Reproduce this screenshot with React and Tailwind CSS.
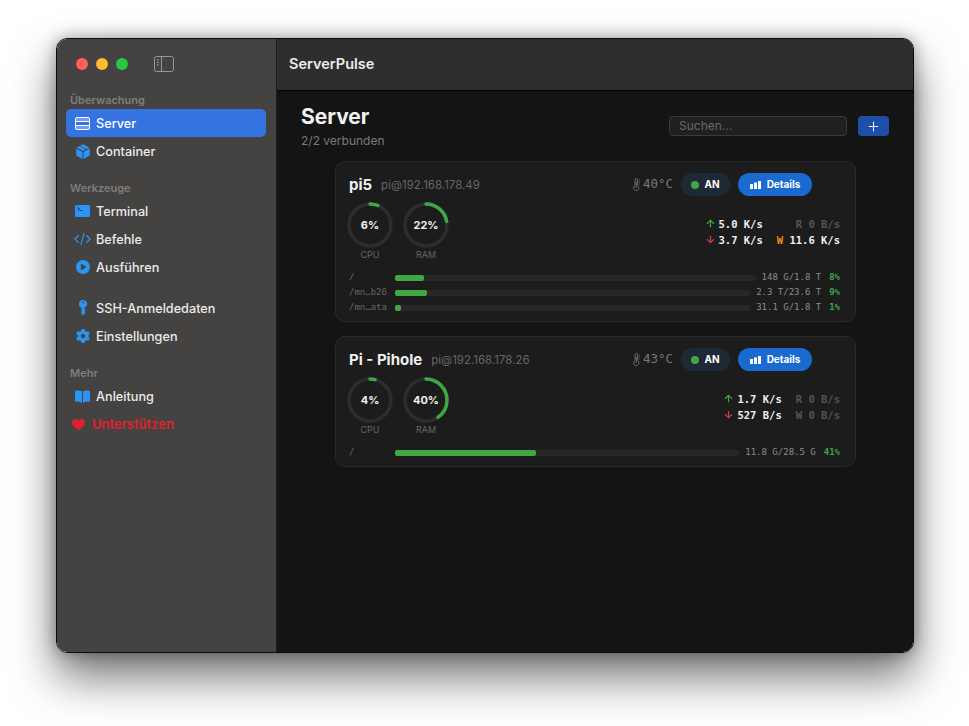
import { ArrowUp, ArrowDown, Plus } from 'lucide-react'
import { FaGear, FaHeart, FaCirclePlay } from 'react-icons/fa6'

const mono = "font-['DejaVu_Sans_Mono','Liberation_Mono',monospace]"

// sidebar icons, all sit in a 17px wide slot
function ServerIcon() {
  return (
    <svg width="15" height="13" viewBox="0 0 15 13" fill="none" stroke="white" strokeWidth="1">
      <rect x="0.5" y="0.5" width="14" height="12" rx="1.5" />
      <path d="M1 4.500h13M1 8.500h13" />
      <path d="M1 1h13v3.500H1z" fill="white" fillOpacity="0.3" stroke="none" />
      <path d="M1 8.500h13V12H1z" fill="white" fillOpacity="0.3" stroke="none" />
    </svg>
  )
}

function BoxIcon() {
  return (
    <svg width="14" height="15" viewBox="0 0 14 15" fill="#2b95f6">
      <path d="M7 0.2 13.4 3.600 7 7 .6 3.600Z" />
      <path d="M.2 4.500 6.500 7.900V15L1 12.100Q.2 11.700.2 10.800Z" />
      <path d="M13.800 4.500 7.500 7.900V15L13 12.100Q13.800 11.700 13.800 10.800Z" />
      <path d="M3.600 1.800 10 5.300" stroke="#454341" strokeWidth="0.7" />
    </svg>
  )
}

function TerminalIcon() {
  return (
    <svg width="15" height="12" viewBox="0 0 15 12">
      <rect width="15" height="12" rx="1.500" fill="#2b95f6" />
      <path d="M2.500 2.500 4.500 4 2.500 5.500" fill="none" stroke="#123" strokeWidth="0.8" />
      <path d="M5.200 5.500h2.300" stroke="#123" strokeWidth="0.8" />
    </svg>
  )
}

function CodeIcon() {
  return (
    <svg width="18" height="14" viewBox="0 0 18 14" fill="none" stroke="#2b95f6" strokeWidth="1.2">
      <path d="M5 3 .9 7 5 11M13 3l4.100 4L13 11M10.700 .8 7.300 13.200" />
    </svg>
  )
}

function KeyIcon() {
  return (
    <svg width="8" height="16" viewBox="0 0 8 16" fill="#2b95f6">
      <path d="M4 0a4 4 0 0 1 1.500 7.700V9l1 1-1 1 1 1.200L4 15.500 2.500 14V7.700A4 4 0 0 1 4 0Z" />
      <circle cx="4" cy="2.400" r="0.9" fill="#454341" />
    </svg>
  )
}

function BookIcon() {
  return (
    <svg width="15" height="13" viewBox="0 0 15 13" fill="#2b95f6">
      <path d="M7 1.500V13Q4.500 11.300.4 11.600q-.4 0-.4-.5V1.300Q0 .8.6.7 4.500 .1 7 1.500Z" />
      <path d="M8 1.500V13q2.500-1.700 6.600-1.400.4 0 .4-.5V1.300q0-.5-.6-.6Q10.500 .1 8 1.500Z" />
    </svg>
  )
}

function NavItem({ icon, label, active }) {
  return (
    <div className={`flex h-7 items-center rounded-[5px] pl-[8px] text-[12.700px] font-medium ${active ? 'bg-[#3573e3] text-white' : 'text-[#ebebeb]'}`}>
      <span className="flex w-[17px] shrink-0 items-center justify-center">{icon}</span>
      <span className="ml-[5px] pt-[2px]">{label}</span>
    </div>
  )
}

function SectionLabel({ children, className = '' }) {
  return <div className={`mb-px flex h-4 items-center pl-[4px] text-[11px] font-semibold text-[#7f7d7b] ${className}`}>{children}</div>
}

function Sidebar() {
  return (
    <aside className="flex w-[220px] shrink-0 flex-col border-r border-[#1c1c1c] bg-[#454341] pr-[10px] pl-[9px]">
      <div className="mb-[4px] flex h-[49px] shrink-0 items-center pl-[10px]">
        <span className="h-3 w-3 rounded-full bg-[#ff5f57]" />
        <span className="ml-2 h-3 w-3 rounded-full bg-[#febc2e]" />
        <span className="ml-2 h-3 w-3 rounded-full bg-[#28c840]" />
        <svg className="ml-[26px]" width="20" height="16" viewBox="0 0 20 16" fill="none" stroke="#9a9896" strokeWidth="1">
          <rect x="0.5" y="0.500" width="19" height="15" rx="2" />
          <path d="M7.500 1v14" />
          <path d="M3 4h2M3 6.500h2M3 9h2" strokeWidth="1.200" />
        </svg>
      </div>

      <SectionLabel>Überwachung</SectionLabel>
      <NavItem active icon={<ServerIcon />} label="Server" />
      <NavItem icon={<BoxIcon />} label="Container" />

      <SectionLabel className="mt-[15px]">Werkzeuge</SectionLabel>
      <NavItem icon={<TerminalIcon />} label="Terminal" />
      <NavItem icon={<CodeIcon />} label="Befehle" />
      <NavItem icon={<FaCirclePlay size={14} color="#2b95f6" />} label="Ausführen" />

      <div className="mt-[13px]">
        <NavItem icon={<KeyIcon />} label="SSH-Anmeldedaten" />
        <NavItem icon={<FaGear size={14} color="#2b95f6" />} label="Einstellungen" />
      </div>

      <SectionLabel className="mt-[15px]">Mehr</SectionLabel>
      <NavItem icon={<BookIcon />} label="Anleitung" />
      <div className="flex h-7 items-center pl-[6px] text-[13px] font-semibold text-[#e0202e]">
        <FaHeart size={13} />
        <span className="ml-[7px] pt-[2px]">Unterstützen</span>
      </div>
    </aside>
  )
}

function Ring({ value, label }) {
  const r = 21
  const c = 2 * Math.PI * r
  return (
    <div className="flex w-[46px] flex-col items-center">
      <div className="relative h-[46px] w-[46px]">
        <svg width="46" height="46" viewBox="0 0 46 46" className="-rotate-90">
          <circle cx="23" cy="23" r={r} fill="none" stroke="#2d2d2d" strokeWidth="3.5" />
          <circle cx="23" cy="23" r={r} fill="none" stroke="#3fa845" strokeWidth="3.5" strokeLinecap="round" strokeDasharray={`${(c * value) / 100} ${c}`} />
        </svg>
        <span className="absolute inset-0 flex items-center justify-center text-[11px] font-bold text-[#f2f2f2]">{value}%</span>
      </div>
      <span className="mt-px text-[9px] leading-[11px] text-[#666]">{label}</span>
    </div>
  )
}

function Thermometer() {
  return (
    <svg width="7" height="13" viewBox="0 0 7 13" fill="none" stroke="#6e6e6e" strokeWidth="1">
      <path d="M2 7.500V1.800a1.300 1.300 0 0 1 2.600 0V7.500a2.700 2.700 0 1 1-2.600 0Z" />
      <path d="M3.300 4v6" />
      <path d="M5.500 2h1.500M5.500 4h1.500M5.500 6h1.500" strokeWidth="0.700" />
    </svg>
  )
}

function DiskRow({ path, used, pct }) {
  return (
    <div className={`flex h-[15px] items-center text-[9px] ${mono}`}>
      <span className="w-[46px] shrink-0 text-[#666]">{path}</span>
      <div className="h-1.5 flex-1 rounded-[2px] bg-[#272727]">
        <div className="h-full min-w-[6px] rounded-[2px] bg-[#3fa845]" style={{ width: `${pct}%` }} />
      </div>
      <span className="ml-[6px] text-[#8c8c8c]">{used}</span>
      <span className="ml-[8px] font-bold text-[#3fa845]">{pct}%</span>
    </div>
  )
}

function ServerCard({ name, host, temp, cpu, ram, up, down, read, write, writeActive, disks }) {
  return (
    <div className="rounded-[10px] border border-[#2a2a2a] bg-[#1c1c1c] pt-[11px] pr-[15px] pb-[6px] pl-[11px]">
      <div className="flex h-[23px] items-center pl-[2px]">
        <span className="pt-[2px] text-[15px] font-bold text-[#f0f0f0]">{name}</span>
        <span className="ml-[9px] pt-[3px] text-[11.500px] text-[#666]">{host}</span>
        <div className="ml-auto flex items-center">
          <Thermometer />
          <span className={`ml-[3px] text-[12.500px] text-[#777] ${mono}`}>{temp}</span>
          <span className="ml-2 flex h-[23px] w-[49px] items-center justify-center gap-[5px] rounded-full bg-[#1d2a36] text-[10px] font-bold text-white">
            <span className="h-2 w-2 rounded-full bg-[#3fa845]" />
            AN
          </span>
          <span className="mr-[28px] ml-2 flex h-[23px] w-[74px] items-center justify-center gap-[6px] rounded-full bg-[#1a6ad0] text-[10px] font-bold text-white">
            <svg width="11" height="8" viewBox="0 0 11 8" fill="white">
              <rect y="3" width="3" height="5" />
              <rect x="4" y="1.500" width="3" height="6.500" />
              <rect x="8" width="3" height="8" />
            </svg>
            Details
          </span>
        </div>
      </div>

      <div className="mt-[6px] flex items-center gap-[10px] pb-[10px]">
        <Ring value={cpu} label="CPU" />
        <Ring value={ram} label="RAM" />
        <div className={`mt-[1px] ml-auto grid grid-cols-[auto_auto] justify-end gap-x-[14px] text-[10.500px] leading-4 font-bold ${mono}`}>
          <span className="flex items-center justify-end text-[#f0f0f0]">
            <ArrowUp size={11} strokeWidth={2.500} className="mr-[3px] text-[#3fa845]" />
            {up}
          </span>
          <span className="text-right text-[#555]">{read}</span>
          <span className="flex items-center justify-end text-[#f0f0f0]">
            <ArrowDown size={11} strokeWidth={2.500} className="mr-[3px] text-[#d43f3f]" />
            {down}
          </span>
          {writeActive ? (
            <span className="text-right text-[#f0f0f0]">
              <span className="text-[#f0920e]">W</span> {write}
            </span>
          ) : (
            <span className="text-right text-[#555]">W {write}</span>
          )}
        </div>
      </div>

      <div className="pl-[2px]">
        {disks.map((d) => (
          <DiskRow key={d.path} {...d} />
        ))}
      </div>
    </div>
  )
}

export default function App() {
  return (
    <div className="h-[726px] w-[969px] overflow-hidden bg-white pt-[38px] pl-[56px] font-['Inter',sans-serif]">
      <div className="flex h-[615px] w-[858px] overflow-hidden rounded-[11px] border border-[#0c0c0c] shadow-[0_24px_46px_rgba(0,0,0,0.55),0_0_16px_rgba(0,0,0,0.35)]">
        <Sidebar />
        <main className="flex min-w-0 flex-1 flex-col bg-[#141414]">
          <header className="flex h-[52px] shrink-0 items-center border-b border-black bg-[#2e2e2e] pb-[2px] pl-[12px] text-[14.500px] font-semibold text-[#ececec]">
            ServerPulse
          </header>

          <div className="flex items-start justify-between pt-[12px] pr-[24px] pl-[24px]">
            <div>
              <h1 className="text-[21px] leading-[27px] font-bold text-[#f2f2f2]">Server</h1>
              <p className="mt-[3px] text-[12px] leading-[16px] text-[#7a7a7a]">2/2 verbunden</p>
            </div>
            <div className="mt-[13px] flex items-center gap-[11px]">
              <div className="flex h-5 w-[178px] items-center rounded-[4px] border border-[#3a3a3a] bg-[#202020] pl-[9px] text-[12px] text-[#6a6a6a]">
                Suchen...
              </div>
              <button className="flex h-5 w-[31px] items-center justify-center rounded-[4px] bg-[#1e4fa8] text-[#e8eefa]">
                <Plus size={15} strokeWidth={1.700} />
              </button>
            </div>
          </div>

          <div className="mt-[12px] ml-[58px] flex w-[521px] flex-col gap-[14px]">
            <ServerCard
              name="pi5"
              host="pi@192.168.178.49"
              temp="40°C"
              cpu={6}
              ram={22}
              up="5.0 K/s"
              down="3.7 K/s"
              read="R 0 B/s"
              write="11.6 K/s"
              writeActive
              disks={[
                { path: '/', used: '148 G/1.8 T', pct: 8 },
                { path: '/mn…b26', used: '2.3 T/23.6 T', pct: 9 },
                { path: '/mn…ata', used: '31.1 G/1.8 T', pct: 1 },
              ]}
            />
            <ServerCard
              name="Pi - Pihole"
              host="pi@192.168.178.26"
              temp="43°C"
              cpu={4}
              ram={40}
              up="1.7 K/s"
              down="527 B/s"
              read="R 0 B/s"
              write="0 B/s"
              disks={[{ path: '/', used: '11.8 G/28.5 G', pct: 41 }]}
            />
          </div>
        </main>
      </div>
    </div>
  )
}
